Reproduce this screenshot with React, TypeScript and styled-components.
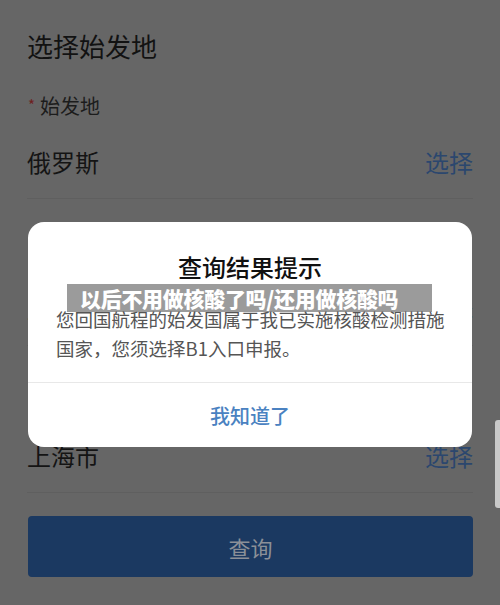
import styled, { createGlobalStyle } from "styled-components";

const GlobalStyle = createGlobalStyle`
    html, body {
        margin: 0;
        padding: 0;
        background: #666666;
    }
    body {
        font-family: "Noto Sans CJK SC", "Noto Sans", sans-serif;
    }
`;

// page behind the dialog is already drawn dimmed (mask colours)
const Screen = styled.div`
    position: relative;
    width: 500px;
    height: 605px;
    overflow: hidden;
    background: #666666;
`;

const Page = styled.div`
    display: flex;
    flex-direction: column;
    padding: 0 27px;
`;

const Header = styled.div`
    padding-top: 28px;
`;

const Title = styled.h1`
    margin: 0;
    font-size: 26px;
    line-height: 36px;
    font-weight: 400;
    color: #121212;
`;

const Field = styled.div<{ $first?: boolean }>`
    display: flex;
    flex-direction: column;
    padding-top: ${(p) => (p.$first ? "30px" : "42px")};
    padding-bottom: 20px;
    border-bottom: 1px solid #5f5f5f;
`;

const Label = styled.div`
    display: flex;
    align-items: flex-start;
    font-size: 20px;
    line-height: 24px;
    color: #1c1c1c;
`;

const Star = styled.span`
    font-size: 15px;
    line-height: 15px;
    color: #6e1f1f;
    margin: 3px 5px 0 1px;
`;

const ValueRow = styled.div`
    display: flex;
    justify-content: space-between;
    align-items: center;
    margin-top: 26px;
    height: 34px;
`;

const Value = styled.span`
    font-size: 24px;
    color: #141414;
`;

const Pick = styled.span`
    font-size: 24px;
    color: #2b476e;
`;

const QueryButton = styled.button`
    margin: 23px 0 0 1px;
    height: 61px;
    border: none;
    border-radius: 4px;
    background: #1b3961;
    color: #8b9098;
    font-family: inherit;
    font-size: 22px;
`;

const ScrollThumb = styled.div`
    position: absolute;
    right: 0;
    top: 420px;
    width: 5px;
    height: 88px;
    border-radius: 3px 0 0 3px;
    background: #c9c9c9;
`;

const Dialog = styled.div`
    position: absolute;
    top: 222px;
    left: 28px;
    width: 444px;
    display: flex;
    flex-direction: column;
    background: #ffffff;
    border-radius: 16px;
    overflow: hidden;
`;

const DialogTitle = styled.div`
    padding-top: 29px;
    font-size: 24px;
    line-height: 32px;
    font-weight: 500;
    text-align: center;
    color: #111111;
`;

const DialogText = styled.p`
    margin: 22px 0 0;
    padding: 0 26px 19px 28px;
    font-size: 18.5px;
    line-height: 29px;
    color: #555555;
`;

const DialogAction = styled.div`
    height: 64px;
    display: flex;
    align-items: center;
    justify-content: center;
    border-top: 1px solid #e8e8e8;
    font-size: 20px;
    font-weight: 500;
    color: #4a82c1;
`;

const Caption = styled.div`
    position: absolute;
    left: 67px;
    top: 284px;
    width: 365px;
    height: 28px;
    padding-left: 13px;
    box-sizing: border-box;
    background: rgba(102, 102, 102, 0.65);
    color: #ffffff;
    font-size: 21px;
    line-height: 28px;
    font-weight: 900;
    letter-spacing: -0.3px;
    white-space: nowrap;
`;

const fields = [
    { label: "始发地", value: "俄罗斯" },
    { label: "入境口岸", value: "上海浦东" },
    { label: "目的地", value: "上海市" },
];

export default function App() {
    return (
        <>
            <GlobalStyle />
            <Screen>
                <Page>
                    <Header>
                        <Title>选择始发地</Title>
                    </Header>
                    {fields.map((f, i) => (
                        <Field key={f.label} $first={i === 0}>
                            <Label>
                                <Star>*</Star>
                                {f.label}
                            </Label>
                            <ValueRow>
                                <Value>{f.value}</Value>
                                <Pick>选择</Pick>
                            </ValueRow>
                        </Field>
                    ))}
                    <QueryButton>查询</QueryButton>
                </Page>
                <ScrollThumb />
                <Dialog>
                    <DialogTitle>查询结果提示</DialogTitle>
                    <DialogText>
                        您回国航程的始发国属于我已实施核酸检测措施国家，您须选择B1入口申报。
                    </DialogText>
                    <DialogAction>我知道了</DialogAction>
                </Dialog>
                <Caption>以后不用做核酸了吗/还用做核酸吗</Caption>
            </Screen>
        </>
    );
}
